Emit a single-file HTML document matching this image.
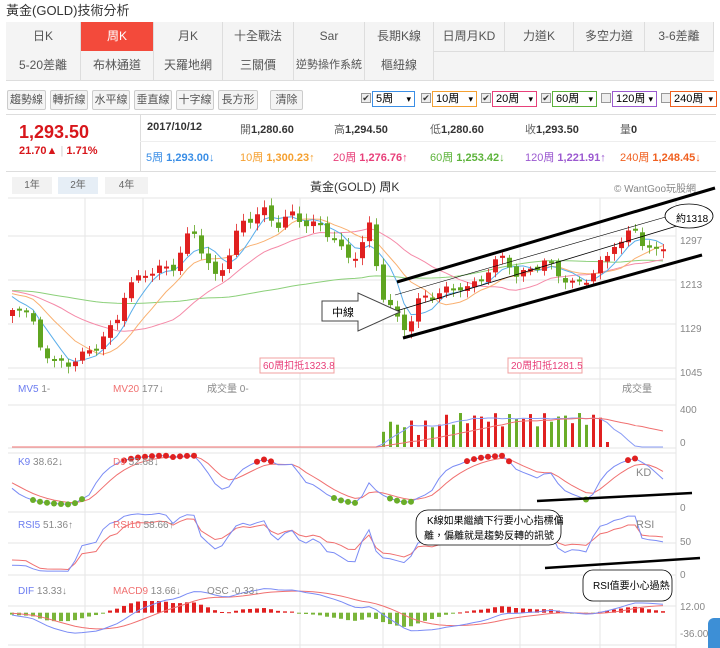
<!DOCTYPE html>
<html><head><meta charset="utf-8">
<style>
*{box-sizing:border-box;margin:0;padding:0}
body{width:720px;height:648px;overflow:hidden;background:#fff;font-family:"Liberation Sans","Noto Sans CJK TC",sans-serif;color:#333;position:relative}
.a{position:absolute;white-space:nowrap}
.tab{position:absolute;height:30px;border-right:1px solid #ddd;border-bottom:1px solid #ddd;background:#f4f4f4;font-size:12px;color:#555;text-align:center;line-height:29px}
.btn{position:absolute;top:90px;height:20px;border:1px solid #ccc;border-radius:2px;background:#f4f4f4;font-size:11px;color:#555;text-align:center;line-height:18px}
.sel{position:absolute;top:91px;height:16px;border:1px solid;font-size:11px;line-height:14px;padding-left:3px;color:#000}
.sel:after{content:"▾";position:absolute;right:3px;font-size:9px}
.cb{position:absolute;top:93px;width:10px;height:10px;border:1px solid #999;background:#eee;font-size:9px;line-height:8px;text-align:center}
.r1{position:absolute;top:121px;font-size:11px;font-weight:bold;color:#333}
.r2{position:absolute;top:149px;font-size:11px;font-weight:bold}
</style></head><body>
<div class="a" style="left:6px;top:0;font-size:13px;color:#333">黃金(GOLD)技術分析</div>
<div class="a" style="left:6px;top:22px;width:708px;height:59px;border:1px solid #ddd;border-right:none;background:#f4f4f4"></div>
<div class="tab" style="left:6px;top:22px;width:75px">日K</div>
<div class="tab" style="left:81px;top:22px;width:73px;background:#f34a3b;color:#fff">周K</div>
<div class="tab" style="left:154px;top:22px;width:69px">月K</div>
<div class="tab" style="left:223px;top:22px;width:71px">十全戰法</div>
<div class="tab" style="left:294px;top:22px;width:71px">Sar</div>
<div class="tab" style="left:365px;top:22px;width:69px">長期K線</div>
<div class="tab" style="left:434px;top:22px;width:71px">日周月KD</div>
<div class="tab" style="left:505px;top:22px;width:69px">力道K</div>
<div class="tab" style="left:574px;top:22px;width:71px">多空力道</div>
<div class="tab" style="left:645px;top:22px;width:69px;border-right:1px solid #ddd">3-6差離</div>
<div class="tab" style="left:6px;top:51px;width:75px">5-20差離</div>
<div class="tab" style="left:81px;top:51px;width:73px">布林通道</div>
<div class="tab" style="left:154px;top:51px;width:69px">天羅地網</div>
<div class="tab" style="left:223px;top:51px;width:71px">三關價</div>
<div class="tab" style="left:294px;top:51px;width:71px;font-size:11px">逆勢操作系統</div>
<div class="tab" style="left:365px;top:51px;width:69px">樞紐線</div>

<div class="btn" style="left:7px;width:39px">趨勢線</div>
<div class="btn" style="left:50px;width:38px">轉折線</div>
<div class="btn" style="left:92px;width:38px">水平線</div>
<div class="btn" style="left:134px;width:38px">垂直線</div>
<div class="btn" style="left:176px;width:38px">十字線</div>
<div class="btn" style="left:218px;width:40px">長方形</div>
<div class="btn" style="left:270px;width:33px">清除</div>
<div class="cb" style="left:361px">✔</div><div class="sel" style="left:372px;width:43px;border-color:#3a8ee6">5周</div>
<div class="cb" style="left:421px">✔</div><div class="sel" style="left:432px;width:45px;border-color:#f5a030">10周</div>
<div class="cb" style="left:481px">✔</div><div class="sel" style="left:492px;width:45px;border-color:#e8407a">20周</div>
<div class="cb" style="left:541px">✔</div><div class="sel" style="left:552px;width:45px;border-color:#5cb33a">60周</div>
<div class="cb" style="left:601px"></div><div class="sel" style="left:612px;width:45px;border-color:#9b59d0">120周</div>
<div class="cb" style="left:661px"></div><div class="sel" style="left:670px;width:47px;border-color:#f06020">240周</div>

<div class="a" style="left:6px;top:114px;width:710px;border-top:1px solid #ddd"></div>
<div class="a" style="left:140px;top:115px;height:56px;border-left:1px solid #ddd"></div>
<div class="a" style="left:140px;top:141px;width:576px;border-top:1px solid #eee"></div>
<div class="a" style="left:6px;top:171px;width:710px;border-top:1px solid #ddd"></div>
<div class="a" style="left:19px;top:122px;font-size:18px;font-weight:bold;color:#d8161b">1,293.50</div>
<div class="a" style="left:19px;top:145px;font-size:11px;font-weight:bold;color:#d8161b">21.70▲ <span style="color:#ccc;font-weight:normal">|</span> 1.71%</div>
<div class="r1" style="left:147px">2017/10/12</div>
<div class="r1" style="left:240px"><span style="font-weight:normal;color:#666">開</span>1,280.60</div>
<div class="r1" style="left:334px"><span style="font-weight:normal;color:#666">高</span>1,294.50</div>
<div class="r1" style="left:430px"><span style="font-weight:normal;color:#666">低</span>1,280.60</div>
<div class="r1" style="left:525px"><span style="font-weight:normal;color:#666">收</span>1,293.50</div>
<div class="r1" style="left:620px"><span style="font-weight:normal;color:#666">量</span>0</div>
<div class="r2" style="left:146px;color:#3a8ee6"><span style="font-weight:normal">5周</span> 1,293.00↓</div>
<div class="r2" style="left:240px;color:#f5a030"><span style="font-weight:normal">10周</span> 1,300.23↑</div>
<div class="r2" style="left:333px;color:#e8407a"><span style="font-weight:normal">20周</span> 1,276.76↑</div>
<div class="r2" style="left:430px;color:#5cb33a"><span style="font-weight:normal">60周</span> 1,253.42↓</div>
<div class="r2" style="left:525px;color:#9b59d0"><span style="font-weight:normal">120周</span> 1,221.91↑</div>
<div class="r2" style="left:620px;color:#f06020"><span style="font-weight:normal">240周</span> 1,248.45↓</div>

<div class="a" style="left:12px;top:177px;width:40px;height:17px;background:#f2f2f2;font-size:10px;color:#666;text-align:center;line-height:17px">1年</div>
<div class="a" style="left:58px;top:177px;width:40px;height:17px;background:#e6eef6;font-size:10px;color:#666;text-align:center;line-height:17px">2年</div>
<div class="a" style="left:105px;top:177px;width:43px;height:17px;background:#f2f2f2;font-size:10px;color:#666;text-align:center;line-height:17px">4年</div>
<div class="a" style="left:310px;top:178px;font-size:12px;color:#333">黃金(GOLD) 周K</div>
<div class="a" style="left:614px;top:180px;font-size:10px;color:#888">© WantGoo玩股網</div>

<svg id="s" class="a" style="left:0;top:0" width="720" height="648" xmlns="http://www.w3.org/2000/svg" font-family="Liberation Sans,Noto Sans CJK TC,sans-serif">
<g stroke="#e6e6e6" stroke-width="1" fill="none">
<line x1="8" y1="198" x2="676" y2="198"/>
<line x1="8" y1="236" x2="676" y2="236"/><line x1="8" y1="280" x2="676" y2="280"/><line x1="8" y1="324" x2="676" y2="324"/><line x1="8" y1="368" x2="676" y2="368"/>
<line x1="8" y1="379" x2="676" y2="379"/><line x1="8" y1="405" x2="676" y2="405"/><line x1="8" y1="448" x2="676" y2="448"/>
<line x1="8" y1="453" x2="676" y2="453"/><line x1="8" y1="512" x2="676" y2="512"/><line x1="8" y1="543" x2="676" y2="543"/><line x1="8" y1="575" x2="676" y2="575"/><line x1="8" y1="606" x2="676" y2="606"/><line x1="8" y1="645" x2="676" y2="645"/>
<line x1="85" y1="198" x2="85" y2="648"/><line x1="143" y1="198" x2="143" y2="648"/><line x1="300" y1="198" x2="300" y2="648"/><line x1="383" y1="198" x2="383" y2="648"/><line x1="440" y1="198" x2="440" y2="648"/><line x1="520" y1="198" x2="520" y2="648"/><line x1="600" y1="198" x2="600" y2="648"/><line x1="676" y1="198" x2="676" y2="648"/>
</g>
<g id="dyn"></g>
<g font-size="10" fill="#888">
<text x="680" y="244">1297</text><text x="680" y="288">1213</text><text x="680" y="332">1129</text><text x="680" y="376">1045</text>
<text x="680" y="413">400</text><text x="680" y="446">0</text><text x="680" y="511">0</text><text x="680" y="545">50</text><text x="680" y="578">0</text>
<text x="680" y="610">12.00</text><text x="680" y="637">-36.00</text>
</g>
<g font-size="10">
<text x="18" y="392" fill="#6b7cf0">MV5 <tspan fill="#888">1-</tspan></text>
<text x="113" y="392" fill="#f07070">MV20 <tspan fill="#888">177↓</tspan></text>
<text x="207" y="392" fill="#888">成交量 0-</text>
<text x="622" y="392" fill="#888">成交量</text>
<text x="18" y="465" fill="#6b7cf0">K9 <tspan fill="#888">38.62↓</tspan></text>
<text x="113" y="465" fill="#f07070">D9 <tspan fill="#888">52.68↓</tspan></text>
<text x="636" y="476" fill="#888" font-size="11">KD</text>
<text x="18" y="528" fill="#6b7cf0">RSI5 <tspan fill="#888">51.36↑</tspan></text>
<text x="113" y="528" fill="#f07070">RSI10 <tspan fill="#888">58.66↑</tspan></text>
<text x="636" y="528" fill="#888" font-size="11">RSI</text>
<text x="18" y="594" fill="#6b7cf0">DIF <tspan fill="#888">13.33↓</tspan></text>
<text x="113" y="594" fill="#f07070">MACD9 <tspan fill="#888">13.66↓</tspan></text>
<text x="207" y="594" fill="#888">OSC -0.33↓</text>
</g>
<g font-size="10" fill="#e8407a">
<rect x="260" y="358" width="74" height="15" fill="#fff" stroke="#f0a0a0"/><text x="263" y="369">60周扣抵1323.8</text>
<rect x="508" y="358" width="74" height="15" fill="#fff" stroke="#f0a0a0"/><text x="511" y="369">20周扣抵1281.5</text>
</g>
<g stroke="#000" fill="none">
<line x1="397" y1="282" x2="715" y2="188" stroke-width="3"/>
<line x1="403" y1="338" x2="702" y2="255" stroke-width="3"/>
<line x1="393" y1="312" x2="690" y2="222" stroke-width="0.8"/>
<line x1="395" y1="295" x2="690" y2="210" stroke-width="0.6"/>
<line x1="537" y1="501" x2="692" y2="493" stroke-width="2.5"/>
<line x1="545" y1="568" x2="700" y2="558" stroke-width="2.5"/>
<ellipse cx="689" cy="216" rx="24" ry="12" fill="#fff" stroke-width="0.8"/>
<path d="M322 301 H358 V293 L400 312 L358 331 V321 H322 Z" fill="#fff" stroke="#444" stroke-width="1"/>
<rect x="416" y="510" width="145" height="35" rx="12" fill="#fff" stroke-width="0.8"/>
<rect x="583" y="570" width="89" height="31" rx="10" fill="#fff" stroke-width="0.8"/>
</g>
<text x="676" y="222" font-size="10" fill="#000">約1318</text>
<text x="332" y="316" font-size="11" fill="#000">中線</text>
<text x="427" y="524" font-size="10" fill="#000">K線如果繼續下行要小心指標偏</text>
<text x="424" y="539" font-size="10" fill="#000">離，偏離就是趨勢反轉的訊號</text>
<text x="593" y="589" font-size="10" fill="#000">RSI值要小心過熱</text>
</svg>
<div class="a" style="left:708px;top:618px;width:14px;height:30px;background:#3d8fd6;border-radius:6px 0 0 0"></div>
<script>
(function(){
var kp=[[12,310],[20,305],[30,318],[40,345],[55,365],[70,362],[85,355],[100,340],[115,325],[125,290],[135,282],[145,272],[160,270],[175,265],[185,240],[195,232],[205,260],[215,278],[225,262],[240,225],[250,218],[262,210],[275,225],[290,215],[305,222],[320,228],[335,238],[345,260],[358,252],[370,225],[380,290],[392,312],[402,328],[412,318],[420,298],[432,295],[445,292],[458,285],[470,290],[485,272],[497,262],[505,255],[518,280],[530,268],[545,262],[560,275],[575,287],[590,275],[605,260],[615,240],[625,245],[632,222],[642,242],[652,255],[663,245]];
function iy(x){for(var j=0;j<kp.length-1;j++){if(x>=kp[j][0]&&x<=kp[j+1][0]){var t=(x-kp[j][0])/(kp[j+1][0]-kp[j][0]);return kp[j][1]+t*(kp[j+1][1]-kp[j][1]);}}return kp[kp.length-1][1];}
var xs=[],ys=[];for(var i=0;i<94;i++){var x=12+i*7;xs.push(x);ys.push(iy(x)+Math.sin(i*1.7)*5);}
var P=function(y){return 1297-(y-240)/0.524};
var pr=ys.map(P);
var pad=[];for(i=0;i<60;i++)pad.push(P(290+Math.sin(i)*8));
var all=pad.concat(pr);
var out=[];
function ma(n,col){var pts=[];for(var i=0;i<94;i++){var s=0;for(var k=0;k<n;k++)s+=all[60+i-k];var v=s/n;pts.push(xs[i]+','+(240+(1297-v)*0.524).toFixed(1));}out.push('<polyline fill="none" stroke="'+col+'" stroke-width="1" points="'+pts.join(' ')+'"/>');}
ma(60,'#8cd07a');ma(20,'#f58aa8');ma(10,'#f9b070');ma(5,'#5aaeea');
for(i=0;i<94;i++){var o=i?ys[i-1]+Math.cos(i*2.3)*2:ys[i]+6,c=ys[i];var up=c<o;var col=up?'#e02020':'#5fa520';var t=Math.min(o,c),b=Math.max(o,c);if(b-t<2)b=t+2;var h1=t-2-Math.abs(Math.sin(i*3.1))*5,h2=b+2+Math.abs(Math.cos(i*2.7))*5;out.push('<line x1="'+(xs[i]+.5)+'" y1="'+h1+'" x2="'+(xs[i]+.5)+'" y2="'+h2+'" stroke="'+col+'" stroke-width="0.8"/>');out.push('<rect x="'+(xs[i]-2)+'" y="'+t+'" width="5" height="'+(b-t)+'" fill="'+col+'"/>');}
var vp=[];for(i=0;i<94;i++){var x=xs[i];var v=0;if(x>=378&&x<=612){v=12+Math.abs(Math.sin(i*1.3))*15+(x>440?7:0);if(x>600)v=5;var up=i&&ys[i]<ys[i-1];out.push('<rect x="'+(x-1)+'" y="'+(447-v)+'" width="3" height="'+v+'" fill="'+(up?'#e02020':'#6aad28')+'"/>');}vp.push(v);}
var m5=[],m20=[];for(i=0;i<94;i++){var s=0;for(var k=0;k<5;k++)s+=vp[Math.max(0,i-k)];m5.push(xs[i]+','+(447-s/5));s=0;for(k=0;k<20;k++)s+=vp[Math.max(0,i-k)];m20.push(xs[i]+','+(447-s/20));}
out.push('<polyline fill="none" stroke="#8a9cf5" points="'+m5.join(' ')+'"/><polyline fill="none" stroke="#f07070" points="'+m20.join(' ')+'"/>');
var K=50,D=50,kk=[],dd=[],dots='';for(i=0;i<94;i++){var lo=1e9,hi=-1e9;for(k=0;k<9;k++){var p=all[60+i-k];lo=Math.min(lo,p);hi=Math.max(hi,p);}var rsv=hi>lo?(pr[i]-lo)/(hi-lo)*100:50;K=K*2/3+rsv/3;D=D*2/3+K/3;var ky=505-K*0.5,dy=505-D*0.5;kk.push(xs[i]+','+ky.toFixed(1));dd.push(xs[i]+','+dy.toFixed(1));if(K>86)dots+='<circle cx="'+xs[i]+'" cy="'+ky+'" r="3" fill="#e02020"/>';if(K<14)dots+='<circle cx="'+xs[i]+'" cy="'+ky+'" r="3" fill="#6aad28"/>';}
out.push('<polyline fill="none" stroke="#f07070" points="'+dd.join(' ')+'"/><polyline fill="none" stroke="#7b8cf5" points="'+kk.join(' ')+'"/>'+dots);
function rsi(n,col){var g=1,l=1,pts=[];for(i=0;i<94;i++){var d=all[60+i]-all[59+i];g=(g*(n-1)+Math.max(d,0))/n;l=(l*(n-1)+Math.max(-d,0))/n;var r=100*g/(g+l);pts.push(xs[i]+','+(572-r*0.62).toFixed(1));}out.push('<polyline fill="none" stroke="'+col+'" points="'+pts.join(' ')+'"/>');}
rsi(10,'#f07070');rsi(5,'#7b8cf5');
var e12=all[0],e26=all[0],sig=0,dif=[],mac=[];for(i=0;i<all.length;i++){e12+=(all[i]-e12)*2/13;e26+=(all[i]-e26)*2/27;var df=e12-e26;sig+=(df-sig)*0.2;if(i>=60){var j=i-60;var z=612.7;dif.push(xs[j]+','+(z-df*0.56).toFixed(1));mac.push(xs[j]+','+(z-sig*0.56).toFixed(1));var os=(df-sig)*0.6;out.push('<rect x="'+(xs[j]-2)+'" y="'+Math.min(z,z-os)+'" width="4" height="'+Math.max(1,Math.abs(os))+'" fill="'+(os>0?'#e02020':'#7ab53a')+'"/>');}}
out.push('<polyline fill="none" stroke="#f07070" points="'+mac.join(' ')+'"/><polyline fill="none" stroke="#7b8cf5" points="'+dif.join(' ')+'"/>');
document.getElementById('dyn').innerHTML=out.join('');
})();
</script>
</body></html>
